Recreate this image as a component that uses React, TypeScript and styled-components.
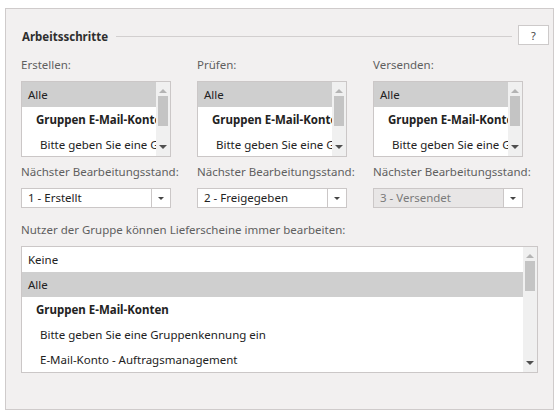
import React from "react";
import styled, { createGlobalStyle } from "styled-components";

const GlobalStyle = createGlobalStyle`
  html, body {
    margin: 0;
    padding: 0;
    background: #ffffff;
  }
  body {
    font-family: "Noto Sans", "Open Sans", sans-serif;
    font-size: 11.5px;
    color: #333;
  }
`;

type Item = { text: string; level: 0 | 1 | 2; selected?: boolean };

const smallItems: Item[] = [
  { text: "Alle", level: 0, selected: true },
  { text: "Gruppen E-Mail-Konten", level: 1 },
  { text: "Bitte geben Sie eine Gruppenkennung ein", level: 2 },
];

const bigItems: Item[] = [
  { text: "Keine", level: 0 },
  { text: "Alle", level: 0, selected: true },
  { text: "Gruppen E-Mail-Konten", level: 1 },
  { text: "Bitte geben Sie eine Gruppenkennung ein", level: 2 },
  { text: "E-Mail-Konto - Auftragsmanagement", level: 2 },
];

const steps = [
  { label: "Erstellen:", status: "1 - Erstellt", disabled: false },
  { label: "Prüfen:", status: "2 - Freigegeben", disabled: false },
  { label: "Versenden:", status: "3 - Versendet", disabled: true },
];

const Panel = styled.div`
  box-sizing: border-box;
  margin: 8px 0 0 5px;
  width: 549px;
  height: 402px;
  border: 1px solid #cfcbcb;
  background: #f2f0f0;
  padding: 16px 15px 0 15px;
`;

const Header = styled.div`
  display: flex;
  align-items: center;
  height: 20px;
  margin-right: -11px;
`;

const Title = styled.div`
  font-weight: bold;
  color: #2e2e2e;
  padding-left: 1px;
  line-height: 20px;
  margin-top: 3px;
`;

const Rule = styled.div`
  flex: 1;
  height: 1px;
  background: #d2cfcf;
  margin: 2px 6px 0 8px;
`;

const HelpButton = styled.button`
  box-sizing: border-box;
  width: 31px;
  height: 20px;
  padding: 0;
  border: 1px solid #cdcaca;
  background: #ffffff;
  font-family: inherit;
  font-size: 11px;
  color: #444;
`;

const Columns = styled.div`
  display: grid;
  grid-template-columns: 150px 150px 150px;
  column-gap: 26px;
  margin-top: 12px;
`;

const Field = styled.div`
  display: flex;
  flex-direction: column;
  min-width: 0;
`;

const Label = styled.div<{ $gap?: number }>`
  height: 16px;
  line-height: 16px;
  color: #5f5f5f;
  white-space: nowrap;
  margin-top: ${({ $gap }) => $gap ?? 0}px;
  margin-bottom: 8px;
`;

const ListBox = styled.div<{ $height: number }>`
  box-sizing: border-box;
  display: flex;
  height: ${({ $height }) => $height}px;
  border: 1px solid #cbc7c7;
  background: #ffffff;
  overflow: hidden;
`;

const Rows = styled.div`
  flex: 1;
  min-width: 0;
  overflow: hidden;
`;

const Row = styled.div<{ $level: number; $selected?: boolean }>`
  height: 25px;
  line-height: 25px;
  white-space: nowrap;
  overflow: hidden;
  color: #222;
  padding-left: ${({ $level }) => [6, 14, 18][$level]}px;
  font-weight: ${({ $level }) => ($level === 1 ? "bold" : "normal")};
  background: ${({ $selected }) => ($selected ? "#cfcfcf" : "transparent")};
`;

const Scrollbar = styled.div`
  display: flex;
  flex-direction: column;
  align-items: center;
  width: 14px;
  flex-shrink: 0;
  background: #f0f0f0;
  padding: 4px 0;
  box-sizing: border-box;
`;

const Arrow = styled.div<{ $up?: boolean }>`
  height: 10px;
  display: flex;
  align-items: center;
  justify-content: center;
  &::after {
    content: "";
    width: 0;
    height: 0;
    border-left: 4px solid transparent;
    border-right: 4px solid transparent;
    ${({ $up }) =>
      $up
        ? "border-bottom: 4px solid #b4b4b4;"
        : "border-top: 4px solid #505050;"}
  }
`;

const Thumb = styled.div`
  width: 10px;
  height: 30px;
  background: #c4c4c4;
`;

const Spacer = styled.div`
  flex: 1;
`;

const SelectRow = styled.div`
  display: flex;
  height: 20px;
`;

const SelectValue = styled.div<{ $disabled?: boolean }>`
  box-sizing: border-box;
  flex: 1;
  height: 20px;
  line-height: 18px;
  padding-left: 6px;
  border: 1px solid #cbc7c7;
  background: ${({ $disabled }) => ($disabled ? "#e8e6e6" : "#ffffff")};
  color: ${({ $disabled }) => ($disabled ? "#7a7a7a" : "#222")};
  white-space: nowrap;
  overflow: hidden;
`;

const SelectButton = styled.div`
  box-sizing: border-box;
  width: 19px;
  height: 20px;
  border: 1px solid #cbc7c7;
  border-left: none;
  background: #ffffff;
  display: flex;
  align-items: center;
  justify-content: center;
  &::after {
    content: "";
    border-left: 3px solid transparent;
    border-right: 3px solid transparent;
    border-top: 3px solid #444;
    margin-top: 1px;
  }
`;

const Wide = styled.div`
  display: flex;
  flex-direction: column;
  width: 517px;
`;

const List: React.FC<{ items: Item[]; height: number }> = ({ items, height }) => (
  <ListBox $height={height}>
    <Rows>
      {items.map((item, i) => (
        <Row key={i} $level={item.level} $selected={item.selected}>
          {item.text}
        </Row>
      ))}
    </Rows>
    <Scrollbar>
      <Arrow $up />
      <Thumb />
      <Spacer />
      <Arrow />
    </Scrollbar>
  </ListBox>
);

const App: React.FC = () => {
  return (
    <>
      <GlobalStyle />
      <Panel>
        <Header>
          <Title>Arbeitsschritte</Title>
          <Rule />
          <HelpButton>?</HelpButton>
        </Header>
        <Columns>
          {steps.map((step) => (
            <Field key={step.label}>
              <Label>{step.label}</Label>
              <List items={smallItems} height={76} />
              <Label $gap={7}>Nächster Bearbeitungsstand:</Label>
              <SelectRow>
                <SelectValue $disabled={step.disabled}>{step.status}</SelectValue>
                <SelectButton />
              </SelectRow>
            </Field>
          ))}
        </Columns>
        <Wide>
          <Label $gap={14}>Nutzer der Gruppe können Lieferscheine immer bearbeiten:</Label>
          <List items={bigItems} height={127} />
        </Wide>
      </Panel>
    </>
  );
};

export default App;
